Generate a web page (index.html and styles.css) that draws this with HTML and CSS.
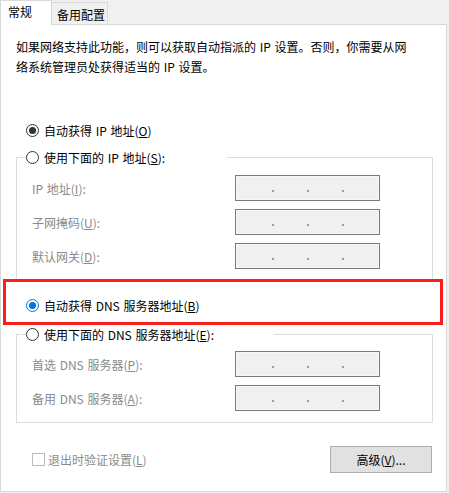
FILE: index.html
```html
<!DOCTYPE html>
<html lang="zh-CN">
<head>
<meta charset="utf-8">
<title>IPv4 属性</title>
<link rel="stylesheet" href="styles.css">
</head>
<body>
<div class="tabs">
  <div class="tab tab-active">常规</div>
  <div class="tab">备用配置</div>
</div>
<div class="page">
  <p class="intro">如果网络支持此功能，则可以获取自动指派的 IP 设置。否则，你需要从网络系统管理员处获得适当的 IP 设置。</p>

  <div class="radio-row">
    <span class="radio on"></span><span>自动获得 IP 地址(<u>O</u>)</span>
  </div>

  <fieldset class="group group-ip">
    <legend class="legend legend-ip"><span class="radio"></span><span>使用下面的 IP 地址(<u>S</u>):</span></legend>
    <div class="rows">
      <div class="field"><span class="label">IP 地址(<u>I</u>):</span><span class="ipbox"><i></i><i></i><i></i></span></div>
      <div class="field"><span class="label">子网掩码(<u>U</u>):</span><span class="ipbox"><i></i><i></i><i></i></span></div>
      <div class="field"><span class="label">默认网关(<u>D</u>):</span><span class="ipbox"><i></i><i></i><i></i></span></div>
    </div>
  </fieldset>

  <div class="radio-row dns-auto">
    <span class="radio on focus"></span><span>自动获得 DNS 服务器地址(<u>B</u>)</span>
    <span class="highlight"></span>
  </div>

  <fieldset class="group group-dns">
    <legend class="legend legend-dns"><span class="radio"></span><span>使用下面的 DNS 服务器地址(<u>E</u>):</span></legend>
    <div class="rows rows-dns">
      <div class="field"><span class="label">首选 DNS 服务器(<u>P</u>):</span><span class="ipbox"><i></i><i></i><i></i></span></div>
      <div class="field"><span class="label">备用 DNS 服务器(<u>A</u>):</span><span class="ipbox"><i></i><i></i><i></i></span></div>
    </div>
  </fieldset>

  <div class="bottom">
    <span class="check"></span><span class="check-label">退出时验证设置(<u>L</u>)</span>
    <button class="btn" type="button">高级(<u>V</u>)...</button>
  </div>
</div>
</body>
</html>
```

FILE: styles.css
```css
html, body {
  margin: 0;
  padding: 0;
}
body {
  width: 449px;
  height: 493px;
  background: #f0f0f0;
  font-family: "Noto Sans CJK SC", "Noto Sans", sans-serif;
  font-size: 12px;
  word-spacing: 1px;
  color: #000;
  overflow: hidden;
}
u {
  text-decoration: underline;
  text-underline-offset: 1px;
}

/* Tabs */
.tabs {
  display: flex;
  align-items: flex-end;
  height: 24px;
}
.tab {
  box-sizing: border-box;
  height: 22px;
  width: 56px;
  padding: 3px 0 0 5px;
  line-height: 17px;
  background: #f0f0f0;
  border-top: 1px solid #d9d9d9;
  border-right: 1px solid #d9d9d9;
}
.tab-active {
  position: relative;
  z-index: 1;
  width: 52px;
  height: 25px;
  margin-bottom: -1px;
  padding: 2px 0 0 7px;
  background: #fff;
  border-left: 1px solid #d9d9d9;
}

/* Page */
.page {
  box-sizing: border-box;
  width: 447px;
  height: 468px;
  background: #fff;
  border: 1px solid #d9d9d9;
}
.intro {
  margin: 12px 0 0 15px;
  width: 400px;
  line-height: 20px;
}

.radio-row {
  display: flex;
  align-items: center;
  gap: 5px;
  height: 20px;
  margin-top: 43px;
  padding-left: 25px;
}
.radio {
  box-sizing: border-box;
  flex: none;
  width: 13px;
  height: 13px;
  border-radius: 50%;
  border: 1px solid #333;
  background: #fff;
  display: grid;
  place-items: center;
}
.radio.on::after {
  content: "";
  width: 7px;
  height: 7px;
  border-radius: 50%;
  background: #333;
}
.radio.focus {
  border-color: #0078d7;
}
.radio.focus::after {
  background: #0078d7;
}

/* Group boxes */
.group {
  box-sizing: border-box;
  width: 417px;
  min-inline-size: 0;
  margin: 7px 0 0 15px;
  padding: 0;
  border: 1px solid #dcdcdc;
}
.legend {
  box-sizing: border-box;
  display: flex;
  align-items: center;
  gap: 5px;
  height: 21px;
  margin-left: 9px;
  padding: 0;
}
.legend-ip { width: 201px; }
.legend-dns { width: 248px; }

.rows {
  display: flex;
  flex-direction: column;
  gap: 8px;
  padding: 7px 0 12px 15px;
}
.rows-dns {
  padding: 6px 0 11px 15px;
}
.field {
  display: flex;
  align-items: center;
  height: 26px;
}
.label {
  width: 203px;
  color: #8a8a8a;
}
.ipbox {
  box-sizing: border-box;
  display: flex;
  align-items: flex-start;
  gap: 33px;
  width: 145px;
  height: 26px;
  padding: 14px 0 0 36px;
  background: #f0f0f0;
  border: 1px solid #7a7a7a;
  box-shadow: inset 0 0 0 1px #f8f8f8;
}
.ipbox i {
  width: 2px;
  height: 2px;
  background: #9a9a9a;
}

/* DNS auto row + highlight */
.dns-auto {
  position: relative;
  box-sizing: border-box;
  height: 42px;
  margin-top: 0;
  padding-top: 4px;
}
.highlight {
  position: absolute;
  top: -3px;
  left: 2px;
  box-sizing: border-box;
  width: 440px;
  height: 46px;
  border: 3px solid #fb1e1a;
}
.group-dns {
  margin-top: 0;
}

/* Bottom */
.bottom {
  box-sizing: border-box;
  display: flex;
  align-items: center;
  width: 431px;
  height: 27px;
  margin-top: 23px;
  padding-left: 31px;
}
.check {
  box-sizing: border-box;
  width: 13px;
  height: 13px;
  margin-right: 3px;
  border: 1px solid #bcbcbc;
  background: #fff;
}
.check-label {
  color: #8a8a8a;
}
.btn {
  box-sizing: border-box;
  margin-left: auto;
  width: 102px;
  height: 27px;
  padding: 0;
  background: #e1e1e1;
  border: 1px solid #adadad;
  border-radius: 0;
  font-family: inherit;
  font-size: 12px;
  word-spacing: 1px;
  color: #000;
}
```
